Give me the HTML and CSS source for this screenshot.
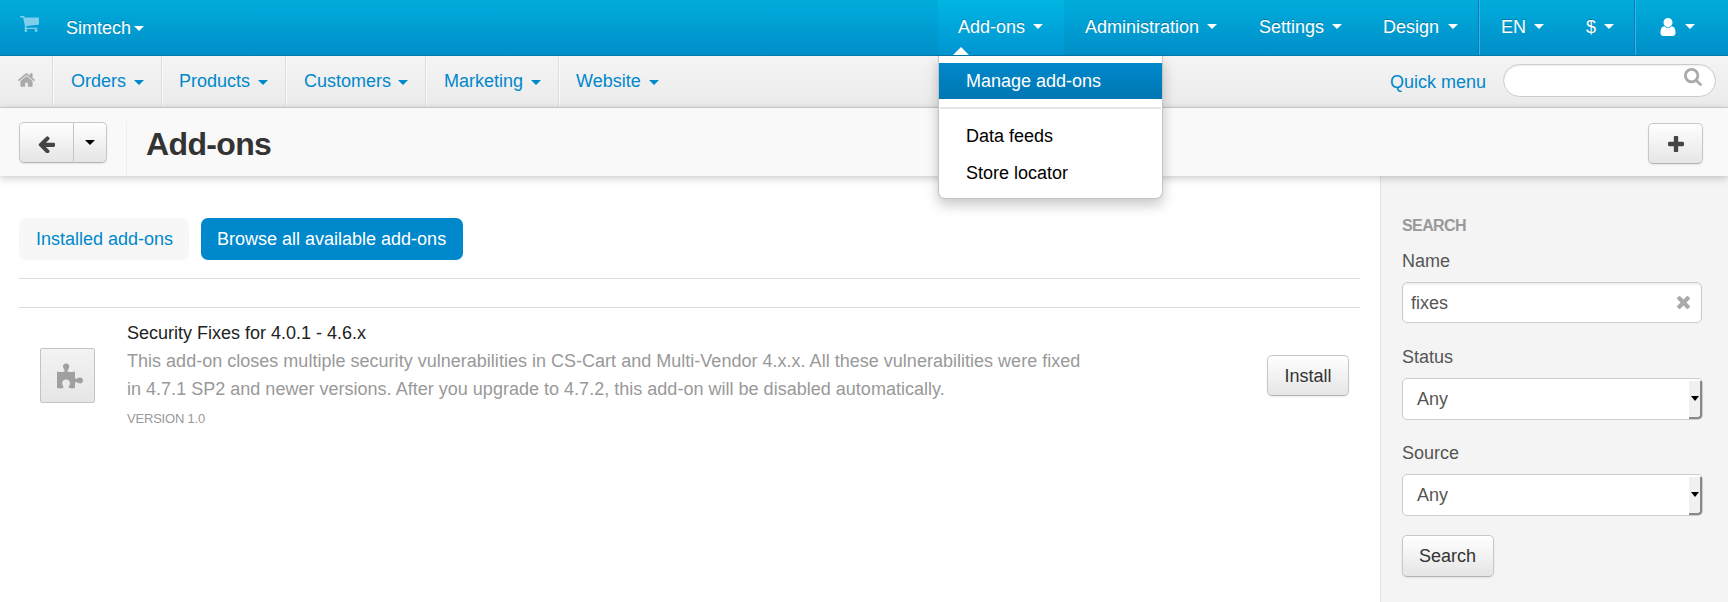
FILE: index.html
```html
<!DOCTYPE html>
<html lang="en">
<head>
<meta charset="utf-8">
<title>Add-ons</title>
<link rel="stylesheet" href="styles.css">
</head>
<body>
<header class="topbar">
  <svg class="cart" viewBox="64 256 1664 1408"><path d="M704 1536q0 52-38 90t-90 38-90-38-38-90 38-90 90-38 90 38 38 90zm896 0q0 52-38 90t-90 38-90-38-38-90 38-90 90-38 90 38 38 90zm128-1088v512q0 24-16.500 42.500t-40.500 21.500l-1044 122q13 60 13 70 0 16-24 64h920q26 0 45 19t19 45-19 45-45 19h-1024q-26 0-45-19t-19-45q0-11 8-31.500t16-36 21.500-40 15.500-29.500l-177-823h-204q-26 0-45-19t-19-45 19-45 45-19h256q16 0 28.500 6.500t19.500 15.500 13 24.500 8 26 5.500 29.500 4.500 26h1201q26 0 45 19t19 45z"/></svg>
  <a class="store"><span>Simtech</span><i class="caret"></i></a>
  <nav class="topnav">
    <div class="top-item active w-addons"><span>Add-ons</span><i class="caret"></i>
      <div class="menu">
        <a class="menu-item selected">Manage add-ons</a>
        <div class="menu-divider"></div>
        <a class="menu-item">Data feeds</a>
        <a class="menu-item">Store locator</a>
      </div>
    </div>
    <div class="top-item w-admin"><span>Administration</span><i class="caret"></i></div>
    <div class="top-item w-settings"><span>Settings</span><i class="caret"></i></div>
    <div class="top-item w-design"><span>Design</span><i class="caret"></i></div>
    <div class="top-item split w-lang"><span>EN</span><i class="caret"></i></div>
    <div class="top-item w-cur"><span>$</span><i class="caret"></i></div>
    <div class="top-item split w-user"><svg class="user" viewBox="256 128 1280 1536"><path d="M1536 1399q0 109-62.500 187t-150.500 78h-854q-88 0-150.500-78t-62.500-187q0-85 8.500-160.500t31.500-152 58.500-131 94-89 134.500-34.500q131 128 313 128t313-128q76 0 134.500 34.500t94 89 58.500 131 31.500 152 8.500 160.500zm-256-887q0 159-112.500 271.500t-271.500 112.500-271.500-112.500-112.500-271.500 112.500-271.500 271.500-112.500 271.500 112.500 112.500 271.500z"/></svg><i class="caret"></i></div>
  </nav>
</header>

<div class="subbar">
  <div class="home"><svg viewBox="89 253 1614 1283"><path d="M1472 992v480q0 26-19 45t-45 19h-384v-384h-256v384h-384q-26 0-45-19t-19-45v-480q0-1 .5-3t.5-3l575-474 575 474q1 2 1 6zm223-69l-62 74q-8 9-21 11h-3q-13 0-21-7l-692-577-692 577q-12 8-24 7-13-2-21-11l-62-74q-8-10-7-23.500t11-21.500l719-599q32-26 76-26t76 26l244 204v-195q0-14 9-23t23-9h192q14 0 23 9t9 23v408l219 182q10 8 11 21.500t-7 23.500z"/></svg></div>
  <div class="sub-item w-orders"><span>Orders</span><i class="caret"></i></div>
  <div class="sub-item w-products"><span>Products</span><i class="caret"></i></div>
  <div class="sub-item w-customers"><span>Customers</span><i class="caret"></i></div>
  <div class="sub-item w-marketing"><span>Marketing</span><i class="caret"></i></div>
  <div class="sub-item w-website"><span>Website</span><i class="caret"></i></div>
  <a class="quick">Quick menu</a>
  <div class="quick-search"><svg viewBox="64 128 1664 1664"><path d="M1216 832q0-185-131.500-316.500t-316.500-131.500-316.500 131.500-131.500 316.500 131.500 316.500 316.500 131.500 316.500-131.500 131.500-316.500zm512 832q0 52-38 90t-90 38q-54 0-90-38l-343-342q-179 124-399 124-143 0-273.500-55.500t-225-150-150-225-55.500-273.500 55.500-273.500 150-225 225-150 273.500-55.500 273.500 55.500 225 150 150 225 55.500 273.500q0 220-124 399l343 343q37 37 37 90z"/></svg></div>
</div>

<div class="actions">
  <div class="btn-group">
    <div class="btn back"><svg viewBox="128 181 1536 1499"><path d="M1664 896v128q0 53-32.500 90.500t-84.500 37.500h-704l293 294q38 36 38 90t-38 90l-75 76q-37 37-90 37-52 0-91-37l-651-652q-37-37-37-90 0-52 37-91l651-650q38-38 91-38 52 0 90 38l75 74q38 38 38 91t-38 91l-293 293h704q52 0 84.500 37.500t32.500 90.500z"/></svg></div>
    <div class="btn more"><i class="caret"></i></div>
  </div>
  <div class="rule"></div>
  <h1>Add-ons</h1>
  <div class="btn add"><svg viewBox="192 128 1408 1408"><path d="M1600 736v192q0 40-28 68t-68 28h-416v416q0 40-28 68t-68 28h-192q-40 0-68-28t-28-68v-416h-416q-40 0-68-28t-28-68v-192q0-40 28-68t68-28h416v-416q0-40 28-68t68-28h192q40 0 68 28t28 68v416h416q40 0 68 28t28 68z"/></svg></div>
</div>

<div class="page">
  <main>
    <div class="tabs">
      <a class="tab tab-installed">Installed add-ons</a>
      <a class="tab tab-browse">Browse all available add-ons</a>
    </div>
    <div class="addon">
      <div class="thumb"><svg viewBox="0 0 26 26"><path d="M0 8.500c2.500.5 5 .8 6.800.3 1.200-.4 1-1.300.3-2.300C6.400 5.500 6 4.700 6 3.500 6 1.600 7.300.5 9.100.5s3.100 1.100 3.100 3c0 1.200-.4 2-1.100 3-.7 1-.9 1.900.3 2.300 1.800.5 4.100.2 6.600-.3v5.300c0 2.100.9 2.500 2.300 1.700.9-.6 1.500-.9 2.700-.9 1.900 0 3 1.200 3 2.900s-1.100 2.900-3 2.900c-1.200 0-1.800-.3-2.700-.9-1.400-.8-2.300-.4-2.300 1.700V25c-2 .5-4.200.5-5.400.1-1.200-.5-1.100-1.300-.5-2.200.5-.8.900-1.500.9-2.700 0-2.200-1.500-3.700-3.900-3.700s-3.900 1.500-3.900 3.700c0 1.200.4 1.900.9 2.700.6.9.7 1.700-.5 2.200-1.200.4-3.600.4-5.600-.1z"/></svg></div>
      <div class="info">
        <div class="title">Security Fixes for 4.0.1 - 4.6.x</div>
        <div class="desc">This add-on closes multiple security vulnerabilities in CS-Cart and Multi-Vendor 4.x.x. All these vulnerabilities were fixed<br>in 4.7.1 SP2 and newer versions. After you upgrade to 4.7.2, this add-on will be disabled automatically.</div>
        <div class="version">VERSION 1.0</div>
      </div>
      <div class="btn install">Install</div>
    </div>
  </main>
  <aside>
    <h2>SEARCH</h2>
    <div class="label">Name</div>
    <div class="field"><span>fixes</span><svg viewBox="302 366 1188 1188"><path d="M1490 1322q0 40-28 68l-136 136q-28 28-68 28t-68-28l-294-294-294 294q-28 28-68 28t-68-28l-136-136q-28-28-28-68t28-68l294-294-294-294q-28-28-28-68t28-68l136-136q28-28 68-28t68 28l294 294 294-294q28-28 68-28t68 28l136 136q28 28 28 68t-28 68l-294 294 294 294q28 28 28 68z"/></svg></div>
    <div class="label">Status</div>
    <div class="select"><span>Any</span><div class="drop"><i></i></div></div>
    <div class="label">Source</div>
    <div class="select"><span>Any</span><div class="drop"><i></i></div></div>
    <div class="btn search">Search</div>
  </aside>
</div>
</body>
</html>
```
FILE: styles.css
```css
* { box-sizing: border-box; }
body {
  margin: 0;
  height: 602px;
  overflow: hidden;
  display: flex;
  flex-direction: column;
  background: #fff;
  color: #555;
  font: 18px/28px "Liberation Sans", Arial, sans-serif;
}
svg { display: block; flex: none; }
span { white-space: nowrap; }
.caret {
  flex: none;
  width: 0;
  border: 5px solid transparent;
  border-top-color: currentColor;
  border-bottom: 0;
}

/* top bar */
.topbar {
  flex: none;
  height: 56px;
  display: flex;
  background: linear-gradient(#00acdb, #008fc9);
  border-bottom: 1px solid #0079ab;
  color: #fff;
  text-shadow: 0 -1px 0 rgba(0, 0, 0, .25);
}
.cart { width: 19px; height: 16px; margin: 16px 0 0 20px; fill: #80cfea; }
.store { display: flex; align-items: center; width: 78px; height: 55px; margin-left: 27px; justify-content: space-between; }
.store .caret { margin-top: 2px; }
.topnav { display: flex; margin-left: auto; padding-right: 13px; }
.top-item {
  position: relative;
  display: flex;
  align-items: center;
  justify-content: space-between;
  padding: 0 21px 2px;
  height: 55px;
}
.active { background: linear-gradient(#00b5e2, #0095d2); }
.active::after {
  content: "";
  position: absolute;
  left: 15px;
  bottom: 0;
  border: 8px solid transparent;
  border-top: 0;
  border-bottom-color: #fff;
}
.split { border-left: 1px solid #45ace6; box-shadow: -1px 0 0 #0083bd; }
.w-addons { width: 126px; padding-left: 20px; }
.w-admin { width: 174px; }
.w-settings { width: 125px; }
.w-design { width: 116px; padding-left: 20px; }
.w-lang { width: 86px; }
.w-cur { width: 70px; }
.w-user { width: 80px; padding-left: 24px; padding-right: 20px; }
.user { width: 16px; height: 18px; fill: #fff; }

.menu {
  position: absolute;
  z-index: 5;
  left: 0;
  top: 56px;
  width: 225px;
  height: 143px;
  padding-top: 7px;
  background: #fff;
  border: 1px solid #c4c4c4;
  border-top: 0;
  border-radius: 0 0 7px 7px;
  box-shadow: 0 6px 13px rgba(0, 0, 0, .22);
  color: #000;
  text-shadow: none;
}
.menu-item { display: block; height: 37px; padding: 0 27px; line-height: 36px; }
.selected { height: 36px; color: #fff; background: linear-gradient(#0088cc, #0077b3); }
.menu-divider { height: 2px; margin: 8px 1px 9px; background: #e5e5e5; }

/* section bar */
.subbar {
  flex: none;
  display: flex;
  height: 52px;
  background: linear-gradient(#f4f4f4, #ebebeb);
  border-bottom: 1px solid #d0d0d0;
  color: #08c;
}
.home, .sub-item { height: 50px; border-right: 1px solid #ddd; box-shadow: 1px 0 0 #fafafa; }
.home { width: 53px; padding: 17px 0 0 18px; }
.home svg { width: 17px; height: 14px; fill: #aaa; }
.sub-item { display: flex; align-items: center; justify-content: space-between; padding: 0 17px 1px 18px; }
.sub-item .caret { margin-top: 4px; }
.w-orders { width: 109px; }
.w-products { width: 124px; padding-left: 17px; }
.w-customers { width: 140px; }
.w-marketing { width: 133px; }
.w-website { width: 118px; padding-left: 17px; padding-right: 18px; border: 0; box-shadow: none; }
.quick { margin: 12px 17px 0 auto; }
.quick-search {
  width: 213px;
  height: 33px;
  margin: 8px 12px 0 0;
  padding: 4px 13px 0 0;
  display: flex;
  justify-content: flex-end;
  background: #fff;
  border: 1px solid #ccc;
  border-radius: 17px;
  box-shadow: inset 0 1px 2px rgba(0, 0, 0, .08);
}
.quick-search svg { width: 18px; height: 18px; margin-top: -1px; fill: #aaa; }

/* title bar */
.actions {
  position: relative;
  flex: none;
  display: flex;
  height: 68px;
  padding: 14px 25px 0 19px;
  background: #f9f9f9;
  box-shadow: 0 2px 8px rgba(0, 0, 0, .22);
}
.btn {
  display: flex;
  align-items: center;
  justify-content: center;
  height: 41px;
  color: #333;
  background: linear-gradient(#fff, #e5e5e5);
  border: 1px solid #c8c8c8;
  border-bottom-color: #b3b3b3;
  border-radius: 5px;
  box-shadow: 0 1px 2px rgba(0, 0, 0, .08);
}
.btn svg { fill: #444; }
.btn-group { display: flex; }
.back { width: 55px; border-radius: 5px 0 0 5px; }
.back svg { width: 17px; height: 17px; margin-top: 4px; }
.more { width: 33px; border-left: 0; border-radius: 0 5px 5px 0; color: #000; }
.rule { width: 2px; height: 54px; margin-left: 19px; background: linear-gradient(90deg, #e9e9e9, #fff); }
h1 { margin: 4px 0 0 18px; font-size: 32px; line-height: 36px; letter-spacing: -.02em; color: #333; }
.add { width: 55px; margin: 1px 0 0 auto; }
.add svg { width: 16px; height: 16px; margin-top: 1px; }

/* content */
.page { flex: 1; display: flex; }
main { flex: 1; padding: 42px 20px 0 19px; }
.tabs { display: flex; gap: 12px; height: 61px; border-bottom: 1px solid #ddd; }
.tab { display: flex; align-items: center; height: 42px; border-radius: 7px; color: #08c; background: #f7f7f7; white-space: nowrap; }
.tab-installed { width: 170px; padding-left: 17px; }
.tab-browse { width: 262px; padding-left: 16px; color: #fff; background: #08c; }
.addon { display: flex; margin-top: 28px; border-top: 1px solid #ddd; }
.thumb {
  width: 55px;
  height: 55px;
  margin: 40px 32px 0 21px;
  padding: 14px 0 0 16px;
  background: linear-gradient(#f3f3f3, #e6e6e6);
  border: 1px solid #c4c4c4;
  border-radius: 2px;
}
.thumb svg { width: 26px; height: 26px; fill: #a0a0a0; }
.info { flex: 1; padding-top: 11px; white-space: nowrap; }
.title { color: #222; }
.desc { color: #999; letter-spacing: .015px; }
.version { margin-top: 3px; font-size: 13px; line-height: 26px; letter-spacing: -.2px; color: #999; }
.install { width: 82px; margin: 47px 11px 0 0; }

/* filter panel */
aside { width: 348px; padding: 36px 25px 0 21px; background: #f4f4f4; border-left: 1px solid #e2e2e2; }
h2 { margin: 0; font-size: 16px; line-height: 28px; letter-spacing: -.6px; color: #999; }
.label { height: 42px; padding-top: 7px; }
.field, .select {
  display: flex;
  align-items: center;
  height: 41px;
  margin-bottom: 13px;
  background: #fff;
  border: 1px solid #ccc;
  border-radius: 5px;
}
.field { width: 300px; justify-content: space-between; padding: 0 11px 0 8px; box-shadow: inset 0 2px 2px rgba(0, 0, 0, .06); }
.field svg { width: 13px; height: 13px; margin-bottom: 1px; fill: #aaa; }
.select { width: 301px; height: 42px; padding-left: 14px; margin-bottom: 12px; }
.drop {
  display: flex;
  align-items: center;
  justify-content: center;
  width: 13px;
  height: 38px;
  margin: 1px 0 0 auto;
  background: #f1f0ef;
  border-right: 2px solid #888;
  border-bottom: 2px solid #888;
  border-bottom-right-radius: 4px;
}
.drop i { border: 4px solid transparent; border-top: 5px solid #000; border-bottom: 0; }
.search { width: 92px; height: 42px; margin-top: 19px; padding-right: 1px; }
```
